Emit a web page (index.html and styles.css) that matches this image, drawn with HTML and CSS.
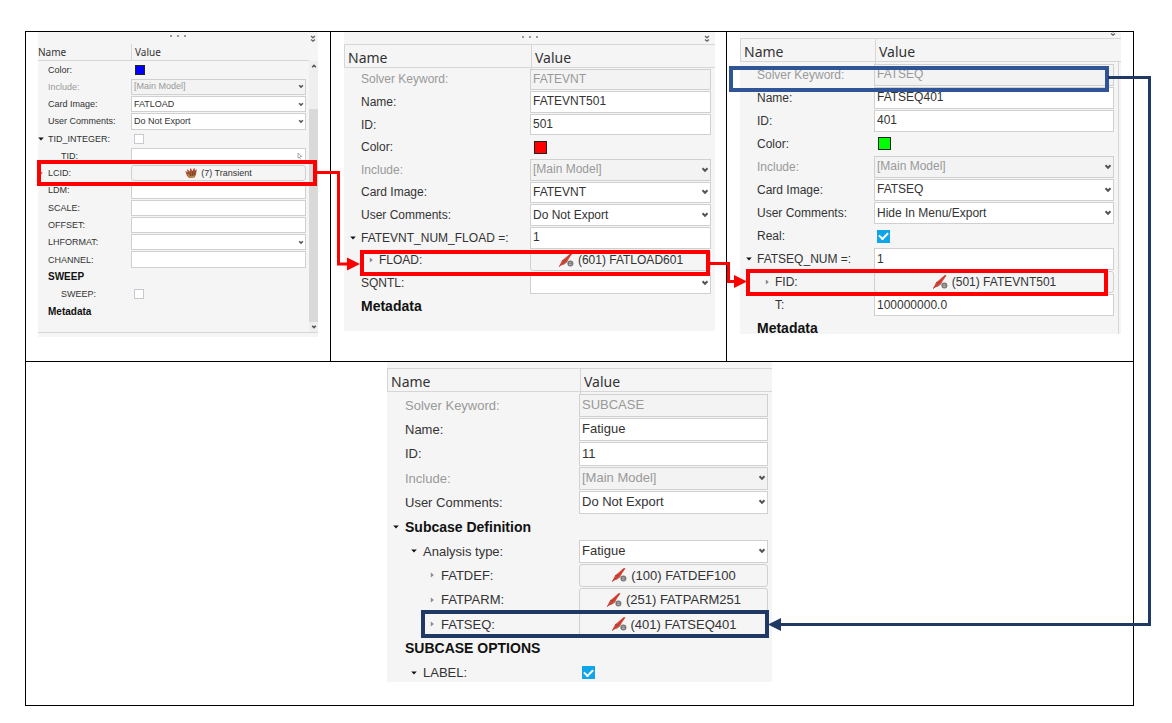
FILE: index.html
```
<!DOCTYPE html>
<html lang="en">
<head>
    <meta charset="UTF-8">
    <meta name="viewport" content="width=device-width, initial-scale=1.0">
    <title>Fatigue card references</title>
    <link rel="stylesheet" href="styles.css">
</head>
<body>

    <!-- shared icons -->
    <svg class="defs" width="0" height="0">
        <symbol id="chevron" viewBox="0 0 8 6"><path d="M1.5 1.3 L4 3.8 L6.5 1.3" fill="none" stroke="#555" stroke-width="2"/></symbol>
        <symbol id="open" viewBox="0 0 6 6"><path d="M0.2 1.5 H5.8 L3 4.5 Z" fill="#111"/></symbol>
        <symbol id="closed" viewBox="0 0 6 6"><path d="M1.8 0.4 L4.8 3 L1.8 5.6 Z" fill="#888"/></symbol>
        <symbol id="double" viewBox="0 0 8 8"><path d="M2 1 L4 2.8 L6 1 M2 4.4 L4 6.2 L6 4.4" fill="none" stroke="#666" stroke-width="1.3"/></symbol>
        <symbol id="fatigue" viewBox="0 0 16 16">
            <path d="M1 14.6 L4 8.4 L7 6 L12.8 1 L14.4 1.4 L11 6.4 L9.4 9.6 L5.4 12.6 Z" fill="#e0483a"/>
            <path d="M1 14.6 L5.5 10.5 L13.6 1.6" fill="none" stroke="#a8352b" stroke-width="0.9"/>
            <path d="M4 8.4 L7.4 8.6 M5.4 12.6 L9.4 9.6" fill="none" stroke="#7c4a44" stroke-width="0.7"/>
            <circle cx="12.4" cy="11.6" r="3" fill="#777"/>
            <path d="M11.2 10.8 H13.6 M11.2 12.6 H13.6" stroke="#ccc" stroke-width="0.8"/>
        </symbol>
        <symbol id="load" viewBox="0 0 12 12">
            <path d="M0.3 4 L2.6 5 L2.2 2.2 L4.8 4.4 L5.4 1.2 L7.6 4 L9.2 1 L9.8 3.6 L11.8 2.2 L11 7.4 L9.6 10.4 L4 11 L1.8 8.6 Z" fill="#b0583c"/>
            <path d="M2.6 5 L4.4 9 M4.8 4.4 L6 9.5 M7.6 4 L7.6 9 M9.8 3.6 L9.2 8" stroke="#6e4a20" stroke-width="0.9"/>
            <path d="M3 7 L5 10 L9.4 9.2" fill="none" stroke="#b8923e" stroke-width="1.2"/>
            <path d="M2.4 2.6 L3 4 M5.6 1.6 L6 3.4 M9.2 1.4 L9 3.4" stroke="#e03020" stroke-width="0.9"/>
        </symbol>
    </svg>

    <main class="sheet">
        <section class="cell">
            <form class="panel panel-load">
                <div class="strip"><span class="dots"><i></i><i></i><i></i></span><svg class="more"><use href="#double"/></svg></div>
                <div class="head"><span>Name</span><span>Value</span></div>
                <div class="body">
                    <div class="rows">
                        <div class="row"><div class="name"><label for="l-color">Color:</label></div><div class="value"><button type="button" id="l-color" class="swatch blue"></button></div></div>
                        <div class="row off"><div class="name"><label for="l-inc">Include:</label></div><div class="value"><select id="l-inc" disabled><option>[Main Model]</option></select><svg class="chev"><use href="#chevron"/></svg></div></div>
                        <div class="row"><div class="name"><label for="l-card">Card Image:</label></div><div class="value"><select id="l-card"><option>FATLOAD</option></select><svg class="chev"><use href="#chevron"/></svg></div></div>
                        <div class="row"><div class="name"><label for="l-com">User Comments:</label></div><div class="value"><select id="l-com"><option>Do Not Export</option></select><svg class="chev"><use href="#chevron"/></svg></div></div>
                        <div class="row"><div class="name"><button type="button" class="twisty"><svg><use href="#open"/></svg></button><label for="l-tidint">TID_INTEGER:</label></div><div class="value"><input type="checkbox" id="l-tidint"></div></div>
                        <div class="row"><div class="name level1"><label for="l-tid">TID:</label></div><div class="value"><input type="text" id="l-tid"><svg class="pick" viewBox="0 0 6 8"><path d="M1 1 V6 L2.4 5 L3.6 7.4 M1 1 L5 4.6 H3" fill="none" stroke="#aaa"/></svg></div></div>
                        <div class="row"><div class="name"><button type="button" class="twisty"><svg><use href="#closed"/></svg></button><label for="l-lcid">LCID:</label></div><div class="value"><button type="button" id="l-lcid" class="ref"><svg><use href="#load"/></svg>(7) Transient</button></div><span class="mark red"></span></div>
                        <div class="row"><div class="name"><label for="l-ldm">LDM:</label></div><div class="value"><input type="text" id="l-ldm"></div></div>
                        <div class="row"><div class="name"><label for="l-scale">SCALE:</label></div><div class="value"><input type="text" id="l-scale"></div></div>
                        <div class="row"><div class="name"><label for="l-offset">OFFSET:</label></div><div class="value"><input type="text" id="l-offset"></div></div>
                        <div class="row"><div class="name"><label for="l-lh">LHFORMAT:</label></div><div class="value"><select id="l-lh"><option></option></select><svg class="chev"><use href="#chevron"/></svg></div></div>
                        <div class="row"><div class="name"><label for="l-chan">CHANNEL:</label></div><div class="value"><input type="text" id="l-chan"></div></div>
                        <div class="row group"><div class="name">SWEEP</div></div>
                        <div class="row"><div class="name level1"><label for="l-sweep">SWEEP:</label></div><div class="value"><input type="checkbox" id="l-sweep"></div></div>
                        <div class="row group"><div class="name">Metadata</div></div>
                    </div>
                    <div class="scroll">
                        <svg class="up"><use href="#chevron"/></svg>
                        <span class="thumb"></span>
                        <svg><use href="#chevron"/></svg>
                    </div>
                </div>
            </form>
        </section>

        <section class="cell">
            <form class="panel panel-event">
                <div class="strip"><span class="dots"><i></i><i></i><i></i></span><svg class="more"><use href="#double"/></svg></div>
                <div class="head"><span>Name</span><span>Value</span></div>
                <div class="rows">
                    <div class="row off"><div class="name"><label for="e-key">Solver Keyword:</label></div><div class="value"><input type="text" id="e-key" value="FATEVNT" disabled></div></div>
                    <div class="row"><div class="name"><label for="e-name">Name:</label></div><div class="value"><input type="text" id="e-name" value="FATEVNT501"></div></div>
                    <div class="row"><div class="name"><label for="e-id">ID:</label></div><div class="value"><input type="text" id="e-id" value="501"></div></div>
                    <div class="row"><div class="name"><label for="e-color">Color:</label></div><div class="value"><button type="button" id="e-color" class="swatch red"></button></div></div>
                    <div class="row off"><div class="name"><label for="e-inc">Include:</label></div><div class="value"><select id="e-inc" disabled><option>[Main Model]</option></select><svg class="chev"><use href="#chevron"/></svg></div></div>
                    <div class="row"><div class="name"><label for="e-card">Card Image:</label></div><div class="value"><select id="e-card"><option>FATEVNT</option></select><svg class="chev"><use href="#chevron"/></svg></div></div>
                    <div class="row"><div class="name"><label for="e-com">User Comments:</label></div><div class="value"><select id="e-com"><option>Do Not Export</option></select><svg class="chev"><use href="#chevron"/></svg></div></div>
                    <div class="row"><div class="name"><button type="button" class="twisty"><svg><use href="#open"/></svg></button><label for="e-num">FATEVNT_NUM_FLOAD =:</label></div><div class="value"><input type="text" id="e-num" value="1"></div></div>
                    <div class="row"><div class="name level1"><button type="button" class="twisty"><svg><use href="#closed"/></svg></button><label for="e-fload">FLOAD:</label></div><div class="value"><button type="button" id="e-fload" class="ref"><svg><use href="#fatigue"/></svg>(601) FATLOAD601</button></div><span class="mark red"></span></div>
                    <div class="row"><div class="name"><label for="e-sq">SQNTL:</label></div><div class="value"><select id="e-sq"><option></option></select><svg class="chev"><use href="#chevron"/></svg></div></div>
                    <div class="row group"><div class="name">Metadata</div></div>
                </div>
            </form>
        </section>

        <section class="cell">
            <form class="panel panel-seq">
                <div class="strip"><svg class="more"><use href="#double"/></svg></div>
                <div class="head"><span>Name</span><span>Value</span></div>
                <div class="rows">
                    <div class="row off"><div class="name"><label for="s-key">Solver Keyword:</label></div><div class="value"><input type="text" id="s-key" value="FATSEQ" disabled></div><span class="mark blue"></span></div>
                    <div class="row"><div class="name"><label for="s-name">Name:</label></div><div class="value"><input type="text" id="s-name" value="FATSEQ401"></div></div>
                    <div class="row"><div class="name"><label for="s-id">ID:</label></div><div class="value"><input type="text" id="s-id" value="401"></div></div>
                    <div class="row"><div class="name"><label for="s-color">Color:</label></div><div class="value"><button type="button" id="s-color" class="swatch green"></button></div></div>
                    <div class="row off"><div class="name"><label for="s-inc">Include:</label></div><div class="value"><select id="s-inc" disabled><option>[Main Model]</option></select><svg class="chev"><use href="#chevron"/></svg></div></div>
                    <div class="row"><div class="name"><label for="s-card">Card Image:</label></div><div class="value"><select id="s-card"><option>FATSEQ</option></select><svg class="chev"><use href="#chevron"/></svg></div></div>
                    <div class="row"><div class="name"><label for="s-com">User Comments:</label></div><div class="value"><select id="s-com"><option>Hide In Menu/Export</option></select><svg class="chev"><use href="#chevron"/></svg></div></div>
                    <div class="row"><div class="name"><label for="s-real">Real:</label></div><div class="value"><input type="checkbox" id="s-real" checked></div></div>
                    <div class="row"><div class="name"><button type="button" class="twisty"><svg><use href="#open"/></svg></button><label for="s-num">FATSEQ_NUM =:</label></div><div class="value"><input type="text" id="s-num" value="1"></div></div>
                    <div class="row"><div class="name level1"><button type="button" class="twisty"><svg><use href="#closed"/></svg></button><label for="s-fid">FID:</label></div><div class="value"><button type="button" id="s-fid" class="ref"><svg><use href="#fatigue"/></svg>(501) FATEVNT501</button></div><span class="mark red"></span></div>
                    <div class="row"><div class="name level1"><label for="s-t">T:</label></div><div class="value"><input type="text" id="s-t" value="100000000.0"></div></div>
                    <div class="row group"><div class="name">Metadata</div></div>
                </div>
            </form>
        </section>

        <section class="cell wide">
            <form class="panel panel-subcase">
                <div class="strip"></div>
                <div class="head"><span>Name</span><span>Value</span></div>
                <div class="rows">
                    <div class="row off"><div class="name"><label for="c-key">Solver Keyword:</label></div><div class="value"><input type="text" id="c-key" value="SUBCASE" disabled></div></div>
                    <div class="row"><div class="name"><label for="c-name">Name:</label></div><div class="value"><input type="text" id="c-name" value="Fatigue"></div></div>
                    <div class="row"><div class="name"><label for="c-id">ID:</label></div><div class="value"><input type="text" id="c-id" value="11"></div></div>
                    <div class="row off"><div class="name"><label for="c-inc">Include:</label></div><div class="value"><select id="c-inc" disabled><option>[Main Model]</option></select><svg class="chev"><use href="#chevron"/></svg></div></div>
                    <div class="row"><div class="name"><label for="c-com">User Comments:</label></div><div class="value"><select id="c-com"><option>Do Not Export</option></select><svg class="chev"><use href="#chevron"/></svg></div></div>
                    <div class="row group"><div class="name"><button type="button" class="twisty"><svg><use href="#open"/></svg></button>Subcase Definition</div></div>
                    <div class="row"><div class="name level1"><button type="button" class="twisty"><svg><use href="#open"/></svg></button><label for="c-type">Analysis type:</label></div><div class="value"><select id="c-type"><option>Fatigue</option></select><svg class="chev"><use href="#chevron"/></svg></div></div>
                    <div class="row"><div class="name level2"><button type="button" class="twisty"><svg><use href="#closed"/></svg></button><label for="c-def">FATDEF:</label></div><div class="value"><button type="button" id="c-def" class="ref"><svg><use href="#fatigue"/></svg>(100) FATDEF100</button></div></div>
                    <div class="row"><div class="name level2"><button type="button" class="twisty"><svg><use href="#closed"/></svg></button><label for="c-parm">FATPARM:</label></div><div class="value"><button type="button" id="c-parm" class="ref"><svg><use href="#fatigue"/></svg>(251) FATPARM251</button></div></div>
                    <div class="row"><div class="name level2"><button type="button" class="twisty"><svg><use href="#closed"/></svg></button><label for="c-seq">FATSEQ:</label></div><div class="value"><button type="button" id="c-seq" class="ref"><svg><use href="#fatigue"/></svg>(401) FATSEQ401</button></div><span class="mark navy"></span></div>
                    <div class="row group"><div class="name">SUBCASE OPTIONS</div></div>
                    <div class="row"><div class="name level1"><button type="button" class="twisty"><svg><use href="#open"/></svg></button><label for="c-label">LABEL:</label></div><div class="value"><input type="checkbox" id="c-label" checked></div></div>
                </div>
            </form>
        </section>

        <!-- connectors between the highlighted rows -->
        <svg class="links" viewBox="0 0 1172 723" preserveAspectRatio="none">
            <g fill="none" stroke-width="3">
                <path d="M316 172.5 H338.5 V264 H350" stroke="#f00"/>
                <path d="M709 263.5 H728.5 V281.5 H737" stroke="#f00"/>
                <path d="M1108 77.5 H1149.5 V624.5 H778" stroke="#1f3864"/>
            </g>
            <path d="M347 257.5 L360 264 L347 270.5 Z" fill="#f00"/>
            <path d="M734 275 L747 281.5 L734 288 Z" fill="#f00"/>
            <path d="M781 618 L768 624.5 L781 631 Z" fill="#1f3864"/>
        </svg>
    </main>

</body>
</html>
```
FILE: styles.css
```
* {
    box-sizing: border-box;
}

body {
    margin: 0;
    background-color: #fff;
    color: #333;
    font-family: "Liberation Sans", Arial, sans-serif;
}

.defs {
    display: block;
}

/* bordered sheet: three panels above, one below */
.sheet {
    position: relative;
    display: grid;
    grid-template-columns: 306fr 396fr 407fr;
    padding: 31px 38px 17px 25px;
}

.cell {
    border: 1px solid #000;
    margin-left: -1px;
    min-height: 331px;
}

.cell:first-child,
.cell.wide {
    margin-left: 0;
}

.cell.wide {
    grid-column: 1 / -1;
    margin-top: -1px;
    min-height: 345px;
    display: flex;
    justify-content: center;
}

.panel {
    --name-col: 186px;
    --slot: 17px;
    --indent: 18px;
    --box: 13px;
    background-color: #f5f5f5;
    font-size: 12px;
    overflow-y: clip;
}

.panel-load {
    --name-col: 93px;
    --slot: 10px;
    --indent: 13px;
    --box: 10px;
    height: 305px;
    margin: 0 12px;
    font-size: 9px;
}

.panel-event {
    height: 299px;
    margin: 0 11px 0 13px;
}

.panel-seq {
    --name-col: 134px;
    height: 302px;
    margin: 0 12px 0 13px;
}

.panel-subcase {
    --name-col: 192px;
    --slot: 18px;
    flex: 0 1 385px;
    height: 320px;
    font-size: 13px;
}

/* splitter strip and header */
.strip {
    position: relative;
    display: flex;
    justify-content: center;
    height: 12px;
    padding-top: 4px;
}

.panel-load .strip {
    padding-top: 3px;
}

.panel-seq .strip {
    height: 6px;
    padding-top: 0;
}

.panel-subcase .strip {
    height: 6px;
}

.dots {
    display: flex;
    gap: 5px;
}

.dots i {
    width: 2px;
    height: 2px;
    background-color: #999;
}

.more {
    position: absolute;
    right: 4px;
    bottom: 1px;
    width: 8px;
    height: 8px;
}

.panel-load .more {
    right: 1px;
}

.head {
    display: grid;
    grid-template-columns: var(--name-col) 1fr;
    height: 24px;
    border: 1px solid #d6d6d6;
    border-right: none;
    font-family: "Noto Sans", sans-serif;
    font-size: 14px;
    line-height: 26px;
}

.head span {
    padding-left: 3px;
}

.head span + span {
    border-left: 1px solid #d6d6d6;
}

.panel-load .head {
    height: 17px;
    margin-right: 9px;
    border-top: none;
    border-left: none;
    font-size: 10px;
    line-height: 17px;
}

.panel-load .head span:first-child {
    padding-left: 0;
}

/* property rows */
.body {
    display: flex;
    border-bottom: 1px solid #d6d6d6;
}

.rows {
    display: grid;
    grid-auto-rows: 1fr;
    flex: 1;
    padding-right: 4px;
}

.panel-load .rows {
    height: 259px;
    padding-right: 3px;
    margin-bottom: 12px;
}

.panel-event .rows {
    height: 249px;
}

.panel-seq .rows {
    height: 278px;
    padding-top: 1px;
    margin-right: 2px;
    border-right: 1px solid #d6d6d6;
}

.panel-subcase .rows {
    height: 293px;
    padding-top: 1px;
}

.row {
    position: relative;
    display: grid;
    grid-template-columns: var(--name-col) 1fr;
    align-items: center;
    white-space: nowrap;
}

.name {
    position: relative;
    padding-left: var(--slot);
}

.name.level1 {
    margin-left: var(--indent);
}

.name.level2 {
    margin-left: calc(var(--indent) * 2);
}

.row.off {
    color: #999;
}

.row.group {
    color: #111;
    font-size: 14px;
    font-weight: bold;
}

.panel-load .row.group {
    font-size: 10px;
}

.twisty {
    position: absolute;
    left: 0;
    top: 0;
    display: flex;
    align-items: center;
    justify-content: center;
    width: var(--slot);
    height: 100%;
    padding: 0;
    border: none;
    background: none;
}

.twisty svg {
    width: 6px;
    height: 6px;
}

.panel-load .twisty {
    width: 6px;
}

.value {
    position: relative;
    display: flex;
    align-items: center;
    height: calc(100% - 1px);
}

input[type="text"],
select,
.ref {
    width: 100%;
    height: 100%;
    padding: 0 2px 1px;
    border: 1px solid #d0d0d0;
    border-radius: 0;
    background-color: #fff;
    color: #333;
    font: inherit;
    appearance: none;
}

input[type="text"]:disabled,
select:disabled {
    background-color: #f3f3f3;
    color: #999;
    opacity: 1;
}

.ref {
    display: flex;
    align-items: center;
    justify-content: center;
    gap: 4px;
    padding: 0;
    border-radius: 3px;
    background-color: #f5f5f5;
}

.ref svg {
    width: 16px;
    height: 16px;
}

.panel-load .ref svg {
    width: 12px;
    height: 12px;
}

.chev {
    position: absolute;
    right: 2px;
    width: 8px;
    height: 6px;
    pointer-events: none;
}

.panel-load .chev {
    width: 6px;
    height: 5px;
}

.pick {
    position: absolute;
    right: 3px;
    width: 6px;
    height: 8px;
}

.swatch {
    width: var(--box);
    height: var(--box);
    margin-left: 4px;
    padding: 0;
    border: 1px solid #222;
}

.swatch.blue {
    background-color: #00f;
}

.swatch.red {
    background-color: #f00;
}

.swatch.green {
    background-color: #0f0;
}

input[type="checkbox"] {
    width: var(--box);
    height: var(--box);
    margin: 0 0 0 3px;
    border: 1px solid #c8c8d0;
    background-color: #fff;
    appearance: none;
}

input[type="checkbox"]:checked {
    display: flex;
    align-items: center;
    justify-content: center;
    border-color: #0ea5e9;
    background-color: #0ea5e9;
}

input[type="checkbox"]:checked::before {
    content: "";
    width: 7px;
    height: 4px;
    margin-bottom: 2px;
    border: solid #fff;
    border-width: 0 0 2px 2px;
    transform: rotate(-45deg);
}

.scroll {
    display: flex;
    flex-direction: column;
    align-items: center;
    width: 9px;
    background-color: #efefef;
}

.scroll svg {
    width: 6px;
    height: 10px;
}

.scroll .up {
    transform: rotate(180deg);
}

.thumb {
    flex: 1;
    width: 100%;
    margin-top: 38px;
    background-color: #d9d9d9;
}

/* highlight frames round a row */
.mark {
    position: absolute;
    z-index: 1;
    top: -2px;
    bottom: -2px;
    border: 4px solid #f00;
    pointer-events: none;
}

.panel-load .mark {
    top: -5px;
    bottom: -4px;
    left: -1px;
    right: -11px;
}

.panel-event .mark {
    top: 1px;
    bottom: -4px;
    left: 16px;
    right: 1px;
}

.panel-seq .mark {
    left: 6px;
    right: 6px;
}

.panel-seq .mark.blue {
    top: 3px;
    bottom: -6px;
    left: -11px;
    right: 5px;
    border-color: #2f5597;
}

.mark.navy {
    left: 34px;
    right: -1px;
    border-color: #1f3864;
}

.links {
    position: absolute;
    z-index: 2;
    left: 0;
    top: 0;
    width: 100%;
    height: 100%;
    pointer-events: none;
}
```
